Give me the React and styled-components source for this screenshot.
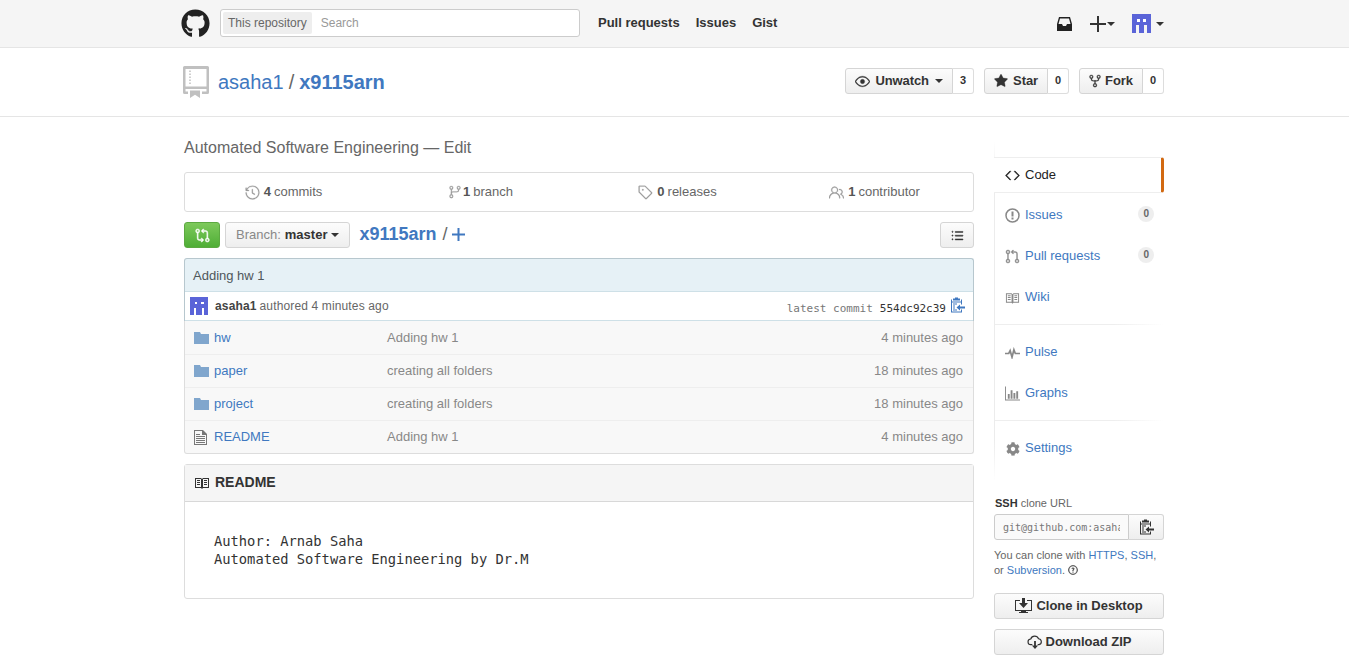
import React from "react";
import styled, { createGlobalStyle } from "styled-components";
import { FaGithub, FaCog } from "react-icons/fa";
import {
  GoEye,
  GoStarFill,
  GoRepoForked,
  GoHistory,
  GoGitBranch,
  GoTag,
  GoPeople,
  GoGitCompare,
  GoListUnordered,
  GoCode,
  GoGitPullRequest,
  GoQuestion,
} from "react-icons/go";

const Global = createGlobalStyle`
  html, body {
    margin: 0;
    height: 665px;
    overflow: hidden;
    background: #fff;
  }
  body {
    font-family: "Liberation Sans", Arial, sans-serif;
    font-size: 13px;
    line-height: 1.4;
    color: #333;
  }
  * { box-sizing: border-box; }
`;

const Container = styled.div`
  width: 980px;
  margin: 0 0 0 184px;
`;

const Header = styled.header`
  height: 48px;
  background: #f5f5f5;
  border-bottom: 1px solid #e5e5e5;
`;

const HeaderInner = styled(Container)`
  display: flex;
  align-items: center;
  height: 47px;
`;

const Logo = styled(FaGithub)`
  width: 29px;
  height: 29px;
  margin-left: -3px;
  color: #222;
`;

const SearchBox = styled.div`
  display: flex;
  align-items: center;
  width: 360px;
  height: 28px;
  margin: 0 0 1px 10px;
  padding: 2px;
  background: #fff;
  border: 1px solid #ccc;
  border-radius: 3px;
  font-size: 12px;
`;

const Scope = styled.span`
  height: 22px;
  line-height: 22px;
  padding: 0 5px;
  background: #eee;
  border-radius: 2px;
  color: #666;
`;

const Placeholder = styled.span`
  margin-left: 9px;
  color: #999;
`;

const TopNav = styled.nav`
  display: flex;
  gap: 16px;
  margin-left: 18px;
  font-weight: 700;
  color: #333;
`;

const TopRight = styled.div`
  display: flex;
  align-items: center;
  margin-left: auto;
  color: #333;
`;

const TopItem = styled.span`
  display: flex;
  margin-left: ${(p) => p.$ml}px;
`;

const Caret = styled.span`
  display: inline-block;
  width: 0;
  height: 0;
  margin-left: ${(p) => p.$gap ?? 4}px;
  border-top: 4px solid #333;
  border-left: 4px solid transparent;
  border-right: 4px solid transparent;
  vertical-align: middle;
`;

const Identicon = ({ size = 18 }) => (
  <svg width={size} height={size} viewBox="0 0 10 10" shapeRendering="crispEdges">
    <path fill="#5a64d8" d="M0 0h10v10H8V6H6.500v4h-3V6H2v4H0z" />
    <path fill="#fff" d="M2.500 2.500H4V4H2.500zM6 2.500h1.500V4H6z" />
  </svg>
);

const RepoHead = styled.div`
  height: 69px;
  border-bottom: 1px solid #e5e5e5;
`;

const RepoHeadInner = styled(Container)`
  display: flex;
  align-items: center;
  height: 68px;
`;

const RepoTitle = styled.h1`
  display: flex;
  align-items: center;
  margin: 0;
  font-size: 20px;
  font-weight: 400;
  line-height: 28px;
  color: #4078c0;
`;

const RepoName = styled.strong`
  font-weight: 700;
`;

const Slash = styled.span`
  margin: 0 5px;
  color: #666;
`;

const Actions = styled.div`
  display: flex;
  gap: 10px;
  margin: 0 0 2px auto;
`;

const Action = styled.div`
  display: flex;
  height: 26px;
`;

const HeadBtn = styled.div`
  display: flex;
  align-items: center;
  gap: 5px;
  height: 26px;
  padding: 0 9px;
  background: linear-gradient(#fcfcfc, #eee);
  border: 1px solid #d5d5d5;
  border-radius: 3px 0 0 3px;
  font-size: 13px;
  font-weight: 700;
  letter-spacing: -0.1px;
  color: #333;
  svg { stroke-width: 0.5; }
`;

const ForkIcon = styled(GoRepoForked)`
  margin: 0 -2px 0 -1px;
`;

const Count = styled.div`
  display: flex;
  align-items: center;
  padding: 0 7px;
  background: #fff;
  border: 1px solid #ddd;
  border-left: 0;
  border-radius: 0 3px 3px 0;
  font-size: 11px;
  font-weight: 700;
  color: #333;
`;

const Layout = styled(Container)`
  display: flex;
  justify-content: space-between;
  padding-top: 20px;
`;

const Main = styled.main`
  width: 790px;
`;

const Description = styled.div`
  height: 35px;
  font-size: 16px;
  line-height: 21px;
  color: #666;
`;

const Numbers = styled.div`
  display: flex;
  height: 40px;
  margin-bottom: 10px;
  border: 1px solid #ddd;
  border-radius: 3px;
`;

const Stat = styled.div`
  flex: 1;
  display: flex;
  align-items: center;
  justify-content: center;
  gap: 4px;
  color: #666;
  svg {
    color: #999;
    stroke-width: 0.4;
  }
  b {
    margin-right: -1px;
    color: #555;
  }
`;

const BranchIcon = styled(GoGitBranch)`
  margin-right: -3px;
`;

const FileNav = styled.div`
  display: flex;
  align-items: center;
  height: 26px;
  margin-bottom: 10px;
`;

const CompareBtn = styled.div`
  display: flex;
  align-items: center;
  justify-content: center;
  width: 36px;
  height: 26px;
  background: linear-gradient(#7dc95b, #4fae36);
  border: 1px solid #5ca941;
  border-radius: 3px;
  color: #fff;
  svg { stroke-width: 0.8; }
`;

const BranchBtn = styled.div`
  display: flex;
  align-items: center;
  height: 26px;
  margin-left: 5px;
  padding: 0 10px;
  background: linear-gradient(#fcfcfc, #eee);
  border: 1px solid #d5d5d5;
  border-radius: 3px;
  color: #888;
  b {
    margin-left: 4px;
    color: #333;
  }
`;

const Crumb = styled.div`
  display: flex;
  align-items: center;
  margin: 0 0 2px 9px;
  font-size: 18px;
  line-height: 26px;
  color: #4078c0;
  b { font-weight: 700; }
`;

const CrumbSlash = styled.span`
  margin: 0 4px 0 6px;
  color: #666;
`;

const ListBtn = styled.div`
  display: flex;
  align-items: center;
  justify-content: center;
  width: 34px;
  height: 26px;
  margin-left: auto;
  background: linear-gradient(#fcfcfc, #eee);
  border: 1px solid #d5d5d5;
  border-radius: 3px;
  color: #333;
  svg { stroke-width: 0.8; }
`;

const CommitBox = styled.div`
  background: #e6f1f6;
  border: 1px solid #b7c7ce;
  border-radius: 3px 3px 0 0;
  border-bottom: 0;
`;

const CommitTitle = styled.div`
  height: 32px;
  padding-left: 8px;
  line-height: 33px;
  color: #4e575b;
`;

const CommitMeta = styled.div`
  display: flex;
  align-items: center;
  height: 30px;
  padding: 0 8px 0 5px;
  background: #fff;
  border-top: 1px solid #cee0e7;
  border-bottom: 1px solid #cee0e7;
  font-size: 12px;
  letter-spacing: 0.14px;
  color: #666;
  b {
    margin: 0 3px 0 7px;
    color: #444;
  }
`;

const CommitSha = styled.span`
  display: flex;
  align-items: center;
  margin-left: auto;
  font-family: "DejaVu Sans Mono", monospace;
  font-size: 11px;
  letter-spacing: 0;
  color: #777;
  b {
    margin: 0 4px 0 7px;
    font-weight: 400;
    color: #333;
  }
`;

const ShaText = styled.span`
  display: flex;
  margin-top: 6px;
`;

const FileTable = styled.div`
  margin-bottom: 10px;
  background: #f8f8f8;
  border: 1px solid #ddd;
  border-top: 0;
  border-radius: 0 0 3px 3px;
`;

const FileRow = styled.div`
  display: flex;
  align-items: center;
  height: 33px;
  border-top: 1px solid ${(p) => (p.$first ? "transparent" : "#eee")};
`;

const FileIcon = styled.span`
  display: flex;
  width: 29px;
  padding-left: 9px;
  color: ${(p) => (p.$dir ? "#80a6cd" : "#777")};
`;

const FileName = styled.span`
  width: 173px;
  color: #4078c0;
`;

const FileMsg = styled.span`
  color: #888;
`;

const FileAge = styled.span`
  margin-left: auto;
  padding-right: 10px;
  color: #888;
`;

const Readme = styled.div`
  height: 135px;
  border: 1px solid #ddd;
  border-radius: 3px;
`;

const ReadmeHead = styled.div`
  display: flex;
  align-items: center;
  gap: 5px;
  height: 37px;
  padding-left: 9px;
  background: #f5f5f5;
  border-bottom: 1px solid #d8d8d8;
  font-size: 14px;
  font-weight: 700;
  color: #333;
`;

const ReadmeBody = styled.pre`
  margin: 0;
  padding: 30px 29px 0;
  font-family: "DejaVu Sans Mono", monospace;
  font-size: 13.75px;
  line-height: 18px;
  color: #333;
`;

const Side = styled.aside`
  width: 170px;
  padding-top: 5px;
`;

const Nav = styled.nav`
  height: 338px;
  margin-bottom: 14px;
  padding-top: 15px;
  border-left: 1px solid;
  border-image: linear-gradient(#fff, #ececec 12%, #ececec 88%, #fff) 1;
`;

const NavItem = styled.div`
  display: flex;
  align-items: center;
  height: ${(p) => (p.$active ? 36 : 41)}px;
  padding: 0 ${(p) => (p.$active ? 8 : 10)}px 0 ${(p) => (p.$active ? 11 : 10)}px;
  margin-left: ${(p) => (p.$active ? -1 : 0)}px;
  margin-bottom: ${(p) => (p.$active ? 2 : 0)}px;
  color: ${(p) => (p.$active ? "#222" : "#4078c0")};
  background: #fff;
  border-right: ${(p) => (p.$active ? "3px solid #d26911" : "0")};
  border-top: ${(p) => (p.$active ? "1px solid #eee" : "0")};
  border-bottom: ${(p) => (p.$active ? "1px solid #eee" : "0")};
  border-radius: ${(p) => (p.$active ? "0 3px 3px 0" : "0")};
  svg {
    color: ${(p) => (p.$active ? "#222" : "#888")};
    stroke-width: ${(p) => (p.$active ? 1 : 0.6)};
  }
`;

const NavIcon = styled.span`
  display: flex;
  justify-content: center;
  flex: none;
  width: 15px;
  margin-right: 5px;
`;

const Pill = styled.span`
  margin: 0 0 3px auto;
  padding: 0 5px;
  background: #eee;
  border-radius: 8px;
  font-size: 10px;
  font-weight: 700;
  line-height: 16px;
  color: #666;
`;

const NavSep = styled.div`
  height: 1px;
  margin: 6px 0 7px;
  background: linear-gradient(to right, #eee 70%, #fff);
`;

const CloneLabel = styled.div`
  height: 20px;
  padding-left: 1px;
  font-size: 11px;
  line-height: 18px;
  color: #666;
  b { color: #333; }
`;

const CloneRow = styled.div`
  display: flex;
  height: 26px;
  margin-bottom: 8px;
`;

const CloneInput = styled.input`
  flex: 1;
  min-width: 0;
  padding: 0 8px;
  border: 1px solid #ccc;
  border-radius: 3px 0 0 3px;
  outline: none;
  background: #fafafa;
  font-family: "DejaVu Sans Mono", monospace;
  font-size: 10px;
  color: #777;
`;

const CloneCopy = styled.div`
  display: flex;
  flex: none;
  align-items: center;
  justify-content: center;
  width: 35px;
  background: linear-gradient(#fcfcfc, #eee);
  border: 1px solid #d5d5d5;
  border-left: 0;
  border-radius: 0 3px 3px 0;
  color: #333;
`;

const CloneHelp = styled.p`
  margin: 0 0 15px;
  font-size: 11px;
  line-height: 15px;
  color: #666;
  a { color: #4078c0; }
  svg {
    color: #333;
    stroke-width: 0.8;
    vertical-align: -1px;
  }
`;

const SideBtn = styled.div`
  display: flex;
  align-items: center;
  justify-content: center;
  gap: ${(p) => p.$gap}px;
  height: 26px;
  margin-bottom: 10px;
  background: linear-gradient(#fcfcfc, #eee);
  border: 1px solid #d5d5d5;
  border-radius: 3px;
  font-weight: 700;
  color: #333;
`;

// old octicons which the package does not carry any more
const RepoSvg = styled.svg`
  flex: none;
  margin: 0 9px 0 -1px;
`;

const RepoBig = () => (
  <RepoSvg width="26" height="32" viewBox="0 0 26 32">
    <path
      fill="#c0c0c0"
      fillRule="evenodd"
      d="M1.500 0h23A1.500 1.500 0 0 1 26 1.500v25a1.500 1.500 0 0 1-1.500 1.500H19v-2.500h4.500V23H2.500v2.500H5V28H1.500A1.500 1.500 0 0 1 0 26.500v-25A1.500 1.500 0 0 1 1.500 0zm1 3v17.500h21V3z"
    />
    <path fill="#c0c0c0" d="M7 24.500h10V32l-5-3.200L7 32z" />
    <path
      fill="#cfcfcf"
      d="M6 4.500h2V6H6zM6 7.500h2V9H6zM6 10.500h2V12H6zM6 13.500h2V15H6zM6 16.500h2V18H6z"
    />
  </RepoSvg>
);

const Inbox = () => (
  <svg width="15" height="14" viewBox="0 0 15 14" fill="#222">
    <path d="M2 0h11l2 7v7H0V7zm1 1.500L1.500 7H5l1 2h3l1-2h3.500L12 1.500z" fillRule="evenodd" />
  </svg>
);

const Plus = ({ size = 16, color = "#333", weight = 2 }) => (
  <svg width={size} height={size} viewBox={`0 0 ${size} ${size}`} fill={color}>
    <rect x="0" y={(size - weight) / 2} width={size} height={weight} />
    <rect x={(size - weight) / 2} y="0" width={weight} height={size} />
  </svg>
);

const Clippy = ({ color = "currentColor" }) => (
  <svg width="15" height="17" viewBox="0 0 15 16" fill={color}>
    <path d="M5 0h3v1h2v2H3V1h2zM1 2h1v2h9V2h1v5h-1V5H2v9h9v-2h1v3H1zM3 6h4v1H3zM3 8h2v1H3zM3 10h2v1H3zM3 12h4v1H3z" />
    <path d="M10 7v2h5v2h-5v2L6.500 10z" />
  </svg>
);

const Book = ({ color = "currentColor" }) => (
  <svg width="16" height="14" viewBox="0 0 16 14" fill={color}>
    <path d="M1 2h6l1 1 1-1h6v10H9l-1 1-1-1H1zm1 1v8h5V3zm7 0v8h5V3zM3 4h3v1H3zM3 6h3v1H3zM3 8h3v1H3zM10 4h3v1h-3zM10 6h3v1h-3zM10 8h3v1h-3z" />
  </svg>
);

const Folder = () => (
  <svg width="15" height="12" viewBox="0 0 15 12" fill="currentColor">
    <path d="M0 0h6l1 2h8v10H0z" />
  </svg>
);

const FileText = () => (
  <svg width="13" height="15" viewBox="0 0 13 15" fill="currentColor">
    <path d="M0 0h9l4 4v11H0zm1 1v13h11V5H8V1zM2 4h4v1H2zM2 6h9v1H2zM2 8h9v1H2zM2 10h9v1H2zM2 12h9v1H2z" />
  </svg>
);

const Bars = () => (
  <svg width="16" height="15" viewBox="0 0 16 15" fill="#888">
    <path d="M0 0h1v14h15v1H0zM3 8h2v5H3zM6 4h2v9H6zM9 7h2v6H9zM12 5h2v8h-2z" />
  </svg>
);

const Alert = () => (
  <svg width="15" height="15" viewBox="0 0 15 15">
    <circle cx="7.500" cy="7.500" r="6.500" fill="none" stroke="#888" strokeWidth="1.500" />
    <path fill="#888" d="M6.500 3.500h2v5h-2zM6.500 9.500h2v2h-2z" />
  </svg>
);

const PulseLine = () => (
  <svg width="16" height="12" viewBox="0 0 16 12">
    <path
      fill="none"
      stroke="#888"
      strokeWidth="1.800"
      d="M0 6.500h4l1.500-3 2 7 2-8 1.500 4h5"
    />
  </svg>
);

const DesktopDownload = () => (
  <svg width="17" height="16" viewBox="0 0 17 16" fill="#333">
    <path d="M0 2h5v1H1v9h15V3h-4V2h5v11h-6v1h2v1H4v-1h2v-1H0z" />
    <path d="M7 0h3v5h3l-4.500 5L4 5h3z" />
  </svg>
);

const CloudDownload = () => (
  <svg width="16" height="16" viewBox="0 0 18 16" fill="none" stroke="#333" strokeWidth="1.300">
    <path d="M6 11H4.500a3.200 3.200 0 0 1-.3-6.400A4.700 4.700 0 0 1 13 4.300a3.400 3.400 0 0 1 .5 6.700H12" />
    <path fill="#333" stroke="none" d="M8 7h2v5h2.500L9 16l-3.500-4H8z" />
  </svg>
);

const files = [
  { name: "hw", dir: true, msg: "Adding hw 1", age: "4 minutes ago" },
  { name: "paper", dir: true, msg: "creating all folders", age: "18 minutes ago" },
  { name: "project", dir: true, msg: "creating all folders", age: "18 minutes ago" },
  { name: "README", dir: false, msg: "Adding hw 1", age: "4 minutes ago" },
];

export default function App() {
  return (
    <>
      <Global />
      <Header>
        <HeaderInner>
          <Logo />
          <SearchBox>
            <Scope>This repository</Scope>
            <Placeholder>Search</Placeholder>
          </SearchBox>
          <TopNav>
            <span>Pull requests</span>
            <span>Issues</span>
            <span>Gist</span>
          </TopNav>
          <TopRight>
            <Inbox />
            <TopItem $ml={18}>
              <Plus />
            </TopItem>
            <Caret $gap={1} />
            <TopItem $ml={17}>
              <Identicon size={19} />
            </TopItem>
            <Caret $gap={5} />
          </TopRight>
        </HeaderInner>
      </Header>

      <RepoHead>
        <RepoHeadInner>
          <RepoTitle>
            <RepoBig />
            asaha1<Slash>/</Slash>
            <RepoName>x9115arn</RepoName>
          </RepoTitle>
          <Actions>
            <Action>
              <HeadBtn>
                <GoEye size={15} /> Unwatch <Caret $gap={1} />
              </HeadBtn>
              <Count>3</Count>
            </Action>
            <Action>
              <HeadBtn>
                <GoStarFill size={14} /> Star
              </HeadBtn>
              <Count>0</Count>
            </Action>
            <Action>
              <HeadBtn>
                <ForkIcon size={14} /> Fork
              </HeadBtn>
              <Count>0</Count>
            </Action>
          </Actions>
        </RepoHeadInner>
      </RepoHead>

      <Layout>
        <Main>
          <Description>Automated Software Engineering — Edit</Description>
          <Numbers>
            <Stat>
              <GoHistory size={15} /> <b>4</b> commits
            </Stat>
            <Stat>
              <BranchIcon size={14} /> <b>1</b> branch
            </Stat>
            <Stat>
              <GoTag size={15} /> <b>0</b> releases
            </Stat>
            <Stat>
              <GoPeople size={15} /> <b>1</b> contributor
            </Stat>
          </Numbers>

          <FileNav>
            <CompareBtn>
              <GoGitCompare size={15} />
            </CompareBtn>
            <BranchBtn>
              Branch: <b>master</b>
              <Caret />
            </BranchBtn>
            <Crumb>
              <b>x9115arn</b>
              <CrumbSlash>/</CrumbSlash>
              <Plus size={13} color="#4078c0" />
            </Crumb>
            <ListBtn>
              <GoListUnordered size={15} />
            </ListBtn>
          </FileNav>

          <CommitBox>
            <CommitTitle>Adding hw 1</CommitTitle>
            <CommitMeta>
              <Identicon />
              <b>asaha1</b> authored 4 minutes ago
              <CommitSha>
                <ShaText>
                  latest commit <b>554dc92c39</b>
                </ShaText>
                <Clippy color="#4078c0" />
              </CommitSha>
            </CommitMeta>
          </CommitBox>
          <FileTable>
            {files.map((f, i) => (
              <FileRow key={f.name} $first={i === 0}>
                <FileIcon $dir={f.dir}>{f.dir ? <Folder /> : <FileText />}</FileIcon>
                <FileName>{f.name}</FileName>
                <FileMsg>{f.msg}</FileMsg>
                <FileAge>{f.age}</FileAge>
              </FileRow>
            ))}
          </FileTable>

          <Readme>
            <ReadmeHead>
              <Book color="#333" />
              README
            </ReadmeHead>
            <ReadmeBody>
              {"Author: Arnab Saha\nAutomated Software Engineering by Dr.M"}
            </ReadmeBody>
          </Readme>
        </Main>

        <Side>
          <Nav>
            <NavItem $active>
              <NavIcon><GoCode size={15} /></NavIcon>
              Code
            </NavItem>
            <NavItem>
              <NavIcon><Alert /></NavIcon>
              Issues
              <Pill>0</Pill>
            </NavItem>
            <NavItem>
              <NavIcon><GoGitPullRequest size={15} /></NavIcon>
              Pull requests
              <Pill>0</Pill>
            </NavItem>
            <NavItem>
              <NavIcon><Book color="#888" /></NavIcon>
              Wiki
            </NavItem>
            <NavSep />
            <NavItem>
              <NavIcon><PulseLine /></NavIcon>
              Pulse
            </NavItem>
            <NavItem>
              <NavIcon><Bars /></NavIcon>
              Graphs
            </NavItem>
            <NavSep />
            <NavItem>
              <NavIcon><FaCog size={14} /></NavIcon>
              Settings
            </NavItem>
          </Nav>

          <CloneLabel>
            <b>SSH</b> clone URL
          </CloneLabel>
          <CloneRow>
            <CloneInput readOnly value="git@github.com:asaha1/x9115arn.git" />
            <CloneCopy>
              <Clippy />
            </CloneCopy>
          </CloneRow>
          <CloneHelp>
            You can clone with <a>HTTPS</a>, <a>SSH</a>,
            <br />
            or <a>Subversion</a>. <GoQuestion size={10} />
          </CloneHelp>
          <SideBtn $gap={4}>
            <DesktopDownload /> Clone in Desktop
          </SideBtn>
          <SideBtn $gap={3}>
            <CloudDownload /> Download ZIP
          </SideBtn>
        </Side>
      </Layout>
    </>
  );
}
